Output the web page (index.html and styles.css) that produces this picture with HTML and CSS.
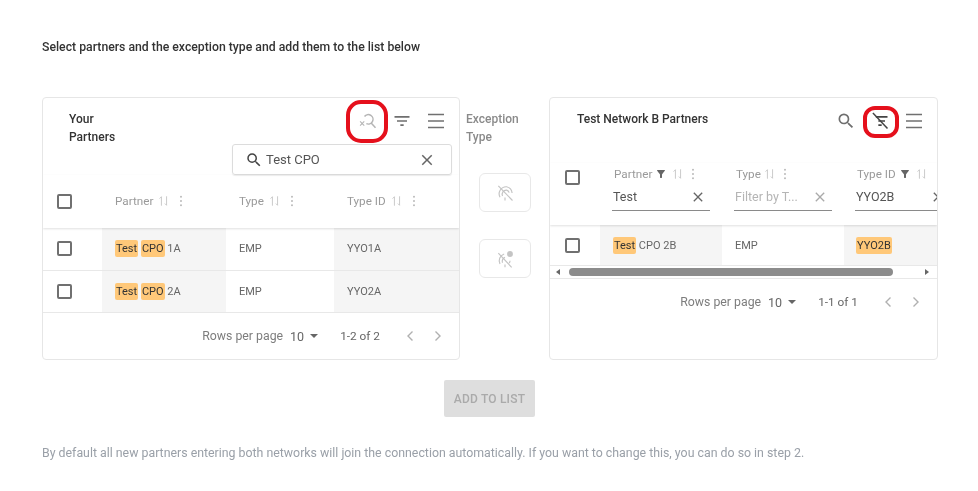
FILE: index.html
```html
<!DOCTYPE html>
<html lang="en">
<head>
<meta charset="utf-8">
<title>Select partners</title>
<link rel="stylesheet" href="styles.css">
</head>
<body>
<svg class="defs" width="0" height="0" aria-hidden="true">
  <symbol id="i-search" viewBox="0 0 24 24"><path d="M15.5 14h-.79l-.28-.27A6.471 6.471 0 0 0 16 9.5 6.5 6.5 0 1 0 9.5 16c1.61 0 3.09-.59 4.23-1.57l.27.28v.79l5 4.99L20.49 19l-4.99-5zm-6 0C7.01 14 5 11.99 5 9.5S7.01 5 9.5 5 14 7.01 14 9.5 11.99 14 9.5 14z"/></symbol>
  <symbol id="i-filter" viewBox="0 0 24 24"><path d="M10 18h4v-2h-4v2zM3 6v2h18V6H3zm3 7h12v-2H6v2z"/></symbol>
  <symbol id="i-close" viewBox="0 0 24 24"><path d="M19 6.41L17.59 5 12 10.59 6.41 5 5 6.41 10.59 12 5 17.59 6.41 19 12 13.41 17.59 19 19 17.59 13.41 12z"/></symbol>
  <symbol id="i-funnel" viewBox="0 0 24 24"><path d="M4.25 5.61C6.27 8.2 10 13 10 13v6c0 .55.45 1 1 1h2c.55 0 1-.45 1-1v-6s3.72-4.8 5.74-7.39A1 1 0 0 0 18.95 4H5.04a1 1 0 0 0-.79 1.61z"/></symbol>
  <symbol id="i-sort" viewBox="0 0 14 14"><path d="M4 12.500V2M1.800 4.200 4 2M10 1.500V12M8 10l2 2" fill="none" stroke="currentColor" stroke-width="1"/></symbol>
  <symbol id="i-more" viewBox="0 0 6 14"><circle cx="3" cy="2" r="1.200"/><circle cx="3" cy="7" r="1.200"/><circle cx="3" cy="12" r="1.200"/></symbol>
  <symbol id="i-menu" viewBox="0 0 18 16"><path d="M1 1.500h16M1 8h16M1 14.500h16" fill="none" stroke="currentColor" stroke-width="1.600"/></symbol>
  <symbol id="i-caret" viewBox="0 0 8 4"><path d="M0 0h8L4 4z"/></symbol>
  <symbol id="i-prev" viewBox="0 0 14 14"><path d="M9.500 2.500 5 7l4.500 4.500" fill="none" stroke="currentColor" stroke-width="1.400"/></symbol>
  <symbol id="i-next" viewBox="0 0 14 14"><path d="M4.500 2.500 9 7l-4.500 4.500" fill="none" stroke="currentColor" stroke-width="1.400"/></symbol>
  <symbol id="i-search-off" viewBox="0 0 24 24"><g fill="none" stroke="currentColor" stroke-width="1.800"><path d="M7.800 6.500A5.700 5.700 0 1 1 10 15.200"/><path d="M15.500 14 21 20"/><path d="M2.500 12.500l5 5M7.500 12.500l-5 5" stroke-width="1.300"/></g></symbol>
  <symbol id="i-filter-off" viewBox="0 0 24 24"><path d="M10 18h4v-2h-4v2zM7 6v2h14V6H7zm3 7h8v-2h-8v2z"/><path d="M3.500 2.500 21 21" fill="none" stroke="currentColor" stroke-width="1.800"/></symbol>
  <symbol id="i-signal-off" viewBox="0 0 24 24"><g fill="none" stroke="currentColor" stroke-width="1.400"><path d="M6 17A8.500 8.500 0 0 1 14 4.500 8.500 8.500 0 0 1 20.500 12"/><path d="M9 15.500A5 5 0 0 1 14 8.500 5 5 0 0 1 17 11.500"/><path d="M12 17.500V21"/><path d="M4 3.500 21 21"/></g></symbol>
  <symbol id="i-signal-badge" viewBox="0 0 24 24"><g fill="none" stroke="currentColor" stroke-width="1.400"><path d="M6 18A8.500 8.500 0 0 1 11 6"/><path d="M9 16.500A5 5 0 0 1 12 10"/><path d="M18 14a5 5 0 0 1-1 3"/><path d="M12 18.500V22"/><path d="M4 5 20 22"/></g><circle cx="18" cy="6" r="3.500"/></symbol>
</svg>

<main class="page">
  <h1 class="lead">Select partners and the exception type and add them to the list below</h1>

  <div class="transfer">
    <section class="card card-left">
      <div class="top-left">
        <h2 class="title title-narrow">Your Partners</h2>
        <div class="top-tools">
          <div class="tools">
            <span class="tool ringed ringed-wide"><svg class="ico-20 muted"><use href="#i-search-off"/></svg></span>
            <span class="tool"><svg class="ico-20"><use href="#i-filter"/></svg></span>
            <span class="tool"><svg class="ico-menu"><use href="#i-menu"/></svg></span>
          </div>
          <div class="searchbox">
            <svg class="ico-18 dark"><use href="#i-search"/></svg>
            <span class="search-text">Test CPO</span>
            <svg class="ico-18 search-clear"><use href="#i-close"/></svg>
          </div>
        </div>
      </div>

      <div class="grid grid-left head-left">
        <div class="cell-check"><span class="check"></span></div>
        <div class="hcell"><span>Partner</span><svg class="ico-sort"><use href="#i-sort"/></svg><svg class="ico-more"><use href="#i-more"/></svg></div>
        <div class="hcell"><span>Type</span><svg class="ico-sort"><use href="#i-sort"/></svg><svg class="ico-more"><use href="#i-more"/></svg></div>
        <div class="hcell"><span>Type ID</span><svg class="ico-sort"><use href="#i-sort"/></svg><svg class="ico-more"><use href="#i-more"/></svg></div>
      </div>
      <div class="grid grid-left row-left">
        <div class="cell-check"><span class="check"></span></div>
        <div class="cell shade"><span><mark>Test</mark> <mark>CPO</mark> 1A</span></div>
        <div class="cell">EMP</div>
        <div class="cell shade">YYO1A</div>
      </div>
      <div class="grid grid-left row-left">
        <div class="cell-check"><span class="check"></span></div>
        <div class="cell shade"><span><mark>Test</mark> <mark>CPO</mark> 2A</span></div>
        <div class="cell">EMP</div>
        <div class="cell shade">YYO2A</div>
      </div>

      <div class="pager">
        <span class="pager-label">Rows per page</span>
        <span class="pager-size">10</span>
        <svg class="ico-caret"><use href="#i-caret"/></svg>
        <span class="pager-range">1-2 of 2</span>
        <svg class="ico-nav"><use href="#i-prev"/></svg>
        <svg class="ico-nav"><use href="#i-next"/></svg>
      </div>
    </section>

    <div class="exceptions">
      <div class="exc-title">Exception Type</div>
      <button class="exc-btn" type="button"><svg class="ico-20"><use href="#i-signal-off"/></svg></button>
      <button class="exc-btn" type="button"><svg class="ico-20"><use href="#i-signal-badge"/></svg></button>
    </div>

    <section class="card card-right">
      <div class="top-right">
        <h2 class="title">Test Network B Partners</h2>
        <div class="tools">
          <span class="tool"><svg class="ico-20"><use href="#i-search"/></svg></span>
          <span class="tool ringed ringed-slim"><svg class="ico-20 dark"><use href="#i-filter-off"/></svg></span>
          <span class="tool"><svg class="ico-menu"><use href="#i-menu"/></svg></span>
        </div>
      </div>

      <div class="grid grid-right head-right">
        <div class="cell-check cell-check-right"><span class="check"></span></div>
        <div class="fcell">
          <div class="flabel"><span>Partner</span><svg class="ico-funnel"><use href="#i-funnel"/></svg><svg class="ico-sort"><use href="#i-sort"/></svg><svg class="ico-more"><use href="#i-more"/></svg></div>
          <div class="finput"><span class="fvalue">Test</span><svg class="ico-16"><use href="#i-close"/></svg></div>
        </div>
        <div class="fcell">
          <div class="flabel"><span>Type</span><svg class="ico-sort"><use href="#i-sort"/></svg><svg class="ico-more"><use href="#i-more"/></svg></div>
          <div class="finput"><span class="fplaceholder">Filter by T...</span><svg class="ico-16 muted"><use href="#i-close"/></svg></div>
        </div>
        <div class="fcell fcell-last">
          <div class="flabel"><span>Type ID</span><svg class="ico-funnel"><use href="#i-funnel"/></svg><svg class="ico-sort"><use href="#i-sort"/></svg></div>
          <div class="finput finput-over"><span class="fvalue">YYO2B</span><svg class="ico-16"><use href="#i-close"/></svg></div>
        </div>
      </div>
      <div class="grid grid-right row-right">
        <div class="cell-check cell-check-right"><span class="check"></span></div>
        <div class="cell shade"><span><mark>Test</mark> CPO 2B</span></div>
        <div class="cell">EMP</div>
        <div class="cell shade cell-id"><span><mark>YYO2B</mark></span></div>
      </div>
      <div class="hscroll">
        <span class="arrow arrow-left"></span>
        <span class="thumb"></span>
        <span class="arrow arrow-right"></span>
      </div>
      <div class="pager pager-right">
        <span class="pager-label">Rows per page</span>
        <span class="pager-size">10</span>
        <svg class="ico-caret"><use href="#i-caret"/></svg>
        <span class="pager-range">1-1 of 1</span>
        <svg class="ico-nav"><use href="#i-prev"/></svg>
        <svg class="ico-nav"><use href="#i-next"/></svg>
      </div>
    </section>
  </div>

  <div class="actions"><button class="add" type="button">ADD TO LIST</button></div>
  <p class="note">By default all new partners entering both networks will join the connection automatically. If you want to change this, you can do so in step 2.</p>
</main>
</body>
</html>
```
FILE: styles.css
```css
* { box-sizing: border-box; }
html, body { margin: 0; padding: 0; background: #fff; }
body { font-family: Roboto, "Liberation Sans", sans-serif; color: #444; overflow: hidden; }
.defs { position: absolute; }
svg { fill: currentColor; display: block; flex: none; }

.page { width: 978px; height: 491px; padding: 38px 40px 0 42px; filter: blur(.4px); }
.lead { margin: 0 0 41px; font-size: 12.250px; line-height: 18px; font-weight: 500; color: #333; }

.transfer { display: flex; height: 263px; }
.card { border: 1px solid #e6e6e6; border-radius: 4px; background: #fff; overflow: hidden; display: flex; flex-direction: column; }
.card-left { width: 418px; }
.card-right { width: 389px; }

.title { margin: 0; padding-top: 12px; font-size: 12px; line-height: 18px; font-weight: 500; color: #333; }
.title-narrow { width: 60px; }

.top-left { display: flex; justify-content: space-between; height: 77px; padding-left: 26px; padding-right: 7px; flex: none; }
.top-right { display: flex; justify-content: space-between; align-items: flex-start; height: 65px; padding-left: 27px; padding-right: 6px; flex: none; }
.top-tools { display: flex; flex-direction: column; align-items: flex-end; }
.tools { display: flex; height: 46px; align-items: center; }
.top-left .tools { margin-right: -1px; }
.tool { position: relative; width: 34px; height: 34px; display: flex; align-items: center; justify-content: center; color: #6f6f6f; }
.ringed::after { content: ""; position: absolute; border: 4px solid #e5101c; }
.ringed-wide::after { left: -5px; right: -3px; top: -4px; bottom: -5px; border-radius: 15px; }
.ringed-slim::after { left: 0; right: -2px; top: 2px; bottom: 0; border-radius: 12px; }

.ico-18 { width: 18px; height: 18px; }
.ico-20 { width: 20px; height: 20px; }
.ico-16 { width: 16px; height: 16px; }
.ico-menu { width: 18px; height: 16px; color: #707070; }
.muted { color: #b5b5b5; }
.dark { color: #444; }

.searchbox { width: 220px; height: 31px; border: 1px solid #dcdcdc; border-radius: 3px; display: flex; align-items: center; padding: 0 15px 0 12px; box-shadow: 0 1px 1px rgba(0,0,0,.08); }
.search-text { margin-left: 3px; font-size: 13px; color: #555; flex: 1; }
.search-clear { color: #666; }

.grid { display: grid; flex: none; }
.grid-left { grid-template-columns: 59px 124px 108px 1fr; }
.grid-right { grid-template-columns: 50px 122px 122px 1fr; }
.head-left { height: 53px; box-shadow: 0 1px 2px rgba(0,0,0,.12); position: relative; }
.row-left { height: 42.500px; border-bottom: 1px solid #e8e8e8; }
.head-right { height: 62px; box-shadow: 0 1px 2px rgba(0,0,0,.12); position: relative; }
.row-right { height: 41px; border-bottom: 1px solid #e8e8e8; }

.cell-check { display: flex; align-items: center; padding-left: 14px; }
.cell-check-right { padding-left: 15px; }
.head-right .cell-check-right { align-items: flex-start; padding-top: 7px; }
.check { width: 15px; height: 15px; border: 2px solid #707070; border-radius: 2px; background: #fff; }

.hcell { display: flex; align-items: center; padding-left: 13px; padding-bottom: 1px; font-size: 11.700px; color: #9a9a9a; }
.hcell span { margin-right: 5px; }
.ico-sort { width: 12px; height: 12px; color: #c2c2c2; }
.ico-more { width: 6px; height: 12px; margin-left: 8px; color: #bbb; }
.ico-funnel { width: 12px; height: 12px; color: #666; margin-right: 5px; }

.cell { display: flex; align-items: center; padding-left: 13px; font-size: 11px; color: #666; white-space: nowrap; }
.shade { background: #f5f5f5; }
mark { background: #ffc879; color: #333; border-radius: 2px; padding: 2px 1px; line-height: 15px; }
.cell-id mark { margin-left: -1px; }

.fcell { padding-top: 2px; padding-left: 12px; padding-right: 12px; min-width: 0; }
.fcell-last { padding-left: 11px; padding-right: 0; overflow: hidden; }
.flabel { display: flex; align-items: center; height: 18px; font-size: 11.700px; color: #9a9a9a; padding-left: 2px; }
.flabel span { margin-right: 3px; white-space: nowrap; }
.flabel .ico-more { margin-left: 6px; }
.finput { display: flex; align-items: center; justify-content: space-between; height: 28px; border-bottom: 1px solid #8a8a8a; font-size: 12.500px; padding-right: 4px; padding-left: 1px; }
.finput-over { width: 110px; padding-right: 0; justify-content: flex-start; }
.finput-over svg { margin-left: 36px; }
.fvalue { color: #555; }
.fplaceholder { color: #b5b5b5; white-space: nowrap; }
.finput .ico-16 { color: #666; }
.finput .muted { color: #aaa; }

.hscroll { display: flex; align-items: center; height: 13px; flex: none; border-bottom: 1px solid #e8e8e8; padding-left: 6px; }
.arrow { width: 0; height: 0; border-top: 3.500px solid transparent; border-bottom: 3.500px solid transparent; }
.arrow-left { border-right: 4px solid #666; margin-right: 9px; }
.arrow-right { border-left: 4px solid #666; margin-left: 32px; }
.thumb { width: 324px; height: 8px; border-radius: 4px; background: #8c8c8c; }

.pager { display: flex; align-items: center; justify-content: flex-end; flex: 1; padding-right: 14px; color: #666; }
.pager-right { flex: none; height: 46px; }
.pager-label { font-size: 12.300px; color: #7d7d7d; }
.pager-size { margin-left: 7px; font-size: 12.500px; }
.ico-caret { width: 8px; height: 4px; margin-left: 6px; color: #666; }
.pager-range { margin-left: 22px; margin-right: 23px; font-size: 11.800px; }
.ico-nav { width: 14px; height: 14px; color: #b0b0b0; }
.ico-nav + .ico-nav { margin-left: 14px; }

.exceptions { width: 89px; flex: none; padding: 13px 0 0 6px; display: flex; flex-direction: column; }
.exc-title { width: 70px; font-size: 12px; line-height: 18px; font-weight: 500; color: #8a8a8a; margin-bottom: 27px; }
.exc-btn { width: 52px; height: 39px; margin: 0 0 27px 13px; padding: 0; border: 1px solid #e8e8e8; border-radius: 6px; background: #fff; color: #c4c4c4; display: flex; align-items: center; justify-content: center; }

.actions { display: flex; justify-content: center; margin-top: 20px; margin-left: -1px; }
.add { width: 91px; height: 37px; border: 0; border-radius: 2px; background: #dedede; color: #aaa; font: 500 12px Roboto, sans-serif; letter-spacing: .2px; }
.note { margin: 27px 0 0; font-size: 12.350px; line-height: 18px; color: #9aa0a8; white-space: nowrap; }
```
